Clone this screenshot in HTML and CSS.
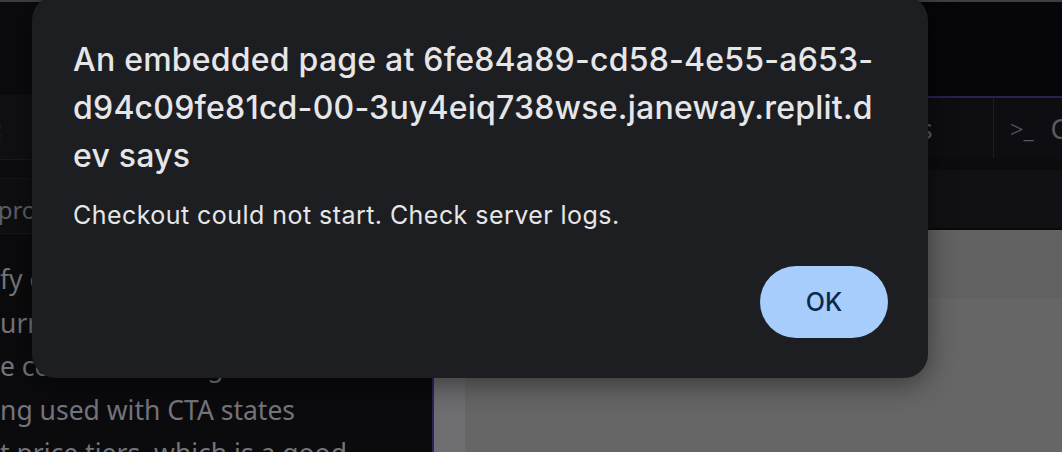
FILE: index.html
```html
<!DOCTYPE html>
<html lang="en">
<head>
<meta charset="utf-8">
<title>Alert</title>
<link rel="stylesheet" href="styles.css">
</head>
<body>
<div class="app">
  <section class="left">
    <div class="l-head"></div>
    <div class="l-toolbar"><span class="back">&lsaquo;</span></div>
    <div class="l-row"></div>
    <div class="l-input"><span>improve</span></div>
    <div class="l-content">
      <p class="line">fy everything works</p>
      <p class="line">urrently the pricing</p>
      <p class="line">e consistent design</p>
      <p class="line">ng used with CTA states</p>
      <p class="line">t price tiers, which is a good</p>
    </div>
  </section>
  <section class="right">
    <div class="r-head"></div>
    <div class="r-tabs">
      <div class="tab tab-a"><span>Tools</span></div>
      <div class="tab tab-b"><span class="prompt">&gt;_</span><span>Console</span></div>
    </div>
    <div class="r-gap"></div>
    <div class="r-url"></div>
    <div class="r-body">
      <div class="r-strip"></div>
      <div class="r-preview">
        <div class="r-band"></div>
      </div>
    </div>
  </section>
</div>

<div class="dialog" role="alertdialog">
  <h1 class="d-title">An embedded page at 6fe84a89-cd58-4e55-a653-<br>d94c09fe81cd-00-3uy4eiq738wse.janeway.replit.d<br>ev says</h1>
  <p class="d-msg">Checkout could not start. Check server logs.</p>
  <div class="d-actions"><button class="d-ok">OK</button></div>
</div>
</body>
</html>
```

FILE: styles.css
```css
* { box-sizing: border-box; }
html, body {
  margin: 0;
  width: 1062px;
  height: 452px;
  overflow: hidden;
  background: #0b0b0e;
  font-family: Inter, "Noto Sans", sans-serif;
}
.app {
  display: flex;
  height: 452px;
  border-top: 2px solid #3c3e42;
}
.left {
  width: 432px;
  flex: 0 0 432px;
  display: flex;
  flex-direction: column;
  background: #0b0b0e;
  overflow: hidden;
}
.l-head { height: 93px; flex: none; background: #0b0b0d; }
.l-toolbar {
  height: 65px;
  flex: none;
  background: #101013;
  border-bottom: 1px solid #1a1a1e;
}
.back {
  display: block;
  margin-left: -7px;
  margin-top: 22px;
  color: #6a6a70;
  font-size: 22px;
}
.l-row { height: 19px; flex: none; background: #0d0d10; border-bottom: 1px solid #16161a; }
.l-input {
  height: 55px;
  flex: none;
  background: #0f0f12;
  border-bottom: 1px solid #17171b;
  padding-top: 16px;
  margin-left: -31px;
  color: #5f5f66;
  font-size: 24px;
  line-height: 30px;
  font-family: "Noto Sans", sans-serif;
  white-space: nowrap;
}
.l-content {
  padding-top: 24px;
  font-family: "Noto Sans", sans-serif;
  font-size: 26.5px;
  color: #74747c;
}
.line {
  margin: 0;
  height: 43.5px;
  line-height: 43.5px;
  white-space: nowrap;
}
.right {
  flex: 1;
  min-width: 0;
  overflow: hidden;
  display: flex;
  flex-direction: column;
  border-left: 2px solid #2c2356;
}
.r-head { height: 96px; flex: none; background: #06060a; border-bottom: 2px solid #2a2150; }
.r-tabs {
  height: 60px;
  flex: none;
  display: flex;
  background: #0e0e12;
  padding-left: 433px;
  color: #5a5a60;
  font-size: 27px;
  font-family: "Noto Sans", sans-serif;
  white-space: nowrap;
}
.tab { display: flex; align-items: center; gap: 17px; }
.tab-a { width: 159px; justify-content: flex-end; padding-right: 60px; border-right: 1px solid #1c1c21; }
.tab-b { padding-left: 16px; }
.prompt { font-size: 24px; font-weight: 300; }
.r-gap { height: 12px; flex: none; background: #0c0c0f; }
.r-url { height: 60px; flex: none; background: #111014; border-bottom: 2px solid #0a0a0c; }
.r-body { flex: 1; display: flex; }
.r-strip { width: 31px; background: #6d6d72; }
.r-preview { flex: 1; background: #666666; }
.r-band { height: 68px; background: #626262; border-bottom: 1px solid #5f5f5f; }

.dialog {
  position: absolute;
  left: 32px;
  top: -4px;
  width: 896px;
  height: 382px;
  background: #1c1e21;
  border-radius: 24px;
  box-shadow: 0 6px 28px rgba(0, 0, 0, 0.45);
  padding: 40px 40px 40px 41px;
  color: #e6e6e9;
}
.d-title {
  margin: 0;
  font-size: 32px;
  line-height: 48px;
  font-weight: 500;
  letter-spacing: 0.22px;
  white-space: nowrap;
}
.d-msg {
  margin: 19px 0 0;
  font-size: 25px;
  line-height: 32px;
  letter-spacing: 0.45px;
}
.d-actions {
  display: flex;
  justify-content: flex-end;
  margin-top: 35px;
}
.d-ok {
  width: 128px;
  height: 72px;
  border: 0;
  border-radius: 36px;
  background: #a6cdfb;
  color: #0a2a4c;
  font-family: Inter, sans-serif;
  font-size: 25px;
  font-weight: 500;
}
```
